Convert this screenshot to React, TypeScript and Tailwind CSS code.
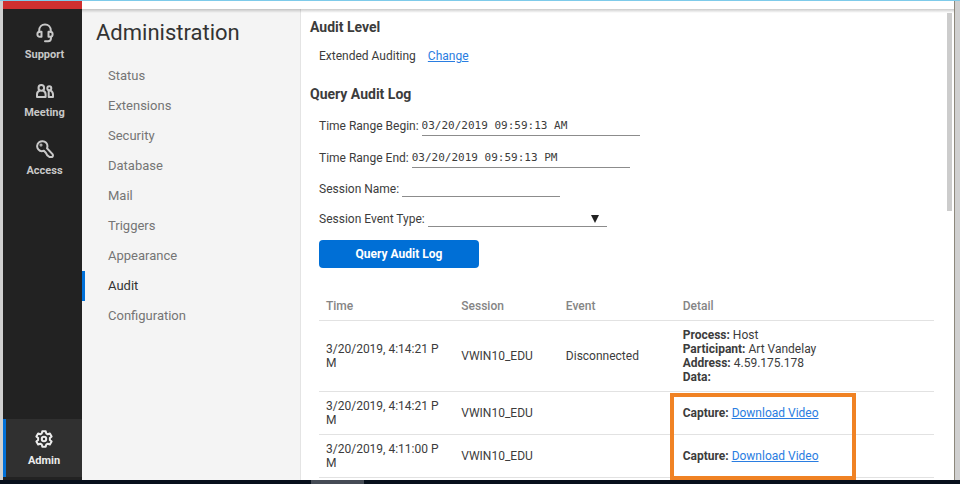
import type React from "react";

type IconProps = { className?: string };

function IconHeadset({ className }: IconProps) {
  return (
    <svg viewBox="0 0 18 20" className={className} fill="none" stroke="currentColor" strokeWidth="2" strokeLinecap="round" strokeLinejoin="round">
      <path d="M3.200 9V7.600C3.200 4 5.700 1.500 9 1.500s5.800 2.500 5.800 6.100V9" />
      <path d="M3.400 8.800H5.500v5H3.800C2.300 13.800 1.400 12.800 1.400 11.300s.8-2.500 2-2.500Z" />
      <path d="M14.600 8.800h-2.100v5h1.700c1.500 0 2.400-1 2.400-2.500s-.8-2.500-2-2.500Z" />
      <path d="M15 14v1c0 1.900-1.100 3.200-2.900 3.200H9" />
    </svg>
  );
}

function IconPeople({ className }: IconProps) {
  return (
    <svg viewBox="0 0 18 14" className={className} fill="none" stroke="currentColor" strokeWidth="2" strokeLinecap="round" strokeLinejoin="round">
      <circle cx="5.300" cy="3.900" r="2.800" />
      <path d="M3.400 6.700C1.900 7.300 1 8.700 1 10.400V13h8.600v-2.600c0-1.700-.9-3.100-2.400-3.700" />
      <circle cx="13.300" cy="4.300" r="2" />
      <path d="M12.700 6.600V13H17v-2.400c0-1.800-.9-3.300-2.400-4" />
    </svg>
  );
}

function IconKey({ className }: IconProps) {
  return (
    <svg viewBox="0 0 18 18" className={className} fill="none" stroke="currentColor" strokeWidth="2" strokeLinecap="round" strokeLinejoin="round">
      <path d="M11 8.300c.7-1.800.5-4-.9-5.600C8.300.8 5.100.6 3.100 2.300.8 4.200.5 7.300 2.300 9.300c1.400 1.700 3.700 2.200 5.600 1.400l1.900 2 1.300 2.400 2.400 1.900h2.900c.6-.8.7-2 .1-2.900L11 8.300Z" />
      <circle cx="5" cy="4.900" r="0.500" />
    </svg>
  );
}

function IconGear({ className }: IconProps) {
  return (
    <svg viewBox="0 0 18 18" className={className} fill="none" stroke="currentColor" strokeWidth="2" strokeLinejoin="round">
      <path d="M7.300 1.200h3.400l.5 2.200 1.500.9 2.200-.8 1.700 2.900-1.700 1.600v2l1.700 1.600-1.700 2.900-2.200-.8-1.500.9-.5 2.200H7.300l-.5-2.200-1.500-.9-2.200.8-1.700-2.900L3.100 10V8L1.400 6.400l1.700-2.900 2.200.8 1.500-.9Z" />
      <circle cx="9" cy="9" r="2.200" />
    </svg>
  );
}

const MAIN_NAV: { label: string; Icon: React.ComponentType<IconProps> }[] = [
  { label: "Support", Icon: IconHeadset },
  { label: "Meeting", Icon: IconPeople },
  { label: "Access", Icon: IconKey },
];

const ADMIN_PAGES = [
  "Status",
  "Extensions",
  "Security",
  "Database",
  "Mail",
  "Triggers",
  "Appearance",
  "Audit",
  "Configuration",
];

type AuditRow = {
  time: string;
  session: string;
  event?: string;
  details?: [string, string][];
};

const ROWS: AuditRow[] = [
  {
    time: "3/20/2019, 4:14:21 PM",
    session: "VWIN10_EDU",
    event: "Disconnected",
    details: [
      ["Process", "Host"],
      ["Participant", "Art Vandelay"],
      ["Address", "4.59.175.178"],
      ["Data", ""],
    ],
  },
  { time: "3/20/2019, 4:14:21 PM", session: "VWIN10_EDU" },
  { time: "3/20/2019, 4:11:00 PM", session: "VWIN10_EDU" },
];

function MainNav() {
  return (
    <nav className="flex w-[79px] shrink-0 flex-col bg-[#222222] pt-3 text-[#c8c8c8]">
      {MAIN_NAV.map(({ label, Icon }) => (
        <a key={label} href="#" className="flex h-[58px] flex-col items-center pl-1 text-[11px] font-bold leading-4">
          <span className="flex h-6 items-center">
            <Icon className="w-[18px]" />
          </span>
          <span className="mt-0.5">{label}</span>
        </a>
      ))}
      <a
        href="#"
        className="mt-auto mb-[3px] flex h-[58px] flex-col items-center border-l-[3px] border-[#0070d8] bg-[#303030] pt-2 text-[11px] font-bold leading-4 text-[#ececec]"
      >
        <span className="flex h-6 items-center">
          <IconGear className="w-[18px]" />
        </span>
        <span className="mt-0.5">Admin</span>
      </a>
    </nav>
  );
}

function AdminNav() {
  return (
    <nav className="w-[219px] shrink-0 border-r border-[#e4e4e4] bg-[#f4f4f4] pt-2">
      <h1 className="pl-[14px] text-[22px] leading-8 text-[#333333]">
        Administration
      </h1>
      <ul className="mt-3">
        {ADMIN_PAGES.map((page) => (
          <li key={page}>
            <a
              href="#"
              className={
                page === "Audit"
                  ? "block h-[30px] border-l-[3px] border-[#0070d8] pl-[23px] text-[13px] leading-[30px] text-[#333333]"
                  : "block h-[30px] pl-[26px] text-[13px] leading-[30px] text-[#757575]"
              }
            >
              {page}
            </a>
          </li>
        ))}
      </ul>
    </nav>
  );
}

function QueryForm() {
  return (
    <form className="pl-[9px]" onSubmit={(e) => e.preventDefault()}>
      <div className="mt-1.5 flex h-8 items-center gap-[3px]">
        <label htmlFor="begin">Time Range Begin:</label>
        <input
          id="begin"
          defaultValue="03/20/2019 09:59:13 AM"
          className="h-5 w-[218px] border-b border-[#8c8c8c] font-['DejaVu_Sans_Mono',monospace] text-[11px] outline-none"
        />
      </div>
      <div className="flex h-8 items-center gap-[3px]">
        <label htmlFor="end">Time Range End:</label>
        <input
          id="end"
          defaultValue="03/20/2019 09:59:13 PM"
          className="h-5 w-[218px] border-b border-[#8c8c8c] font-['DejaVu_Sans_Mono',monospace] text-[11px] outline-none"
        />
      </div>
      <div className="flex h-[30px] items-center gap-[3px]">
        <label htmlFor="session">Session Name:</label>
        <input id="session" className="h-4 w-[158px] border-b border-[#8c8c8c] outline-none" />
      </div>
      <div className="flex h-[30px] items-center gap-[3px]">
        <label htmlFor="event-type">Session Event Type:</label>
        <div className="relative">
          <select
            id="event-type"
            className="block h-4 w-[179px] appearance-none border-b border-[#8c8c8c] bg-transparent outline-none"
          />
          <svg viewBox="0 0 8 8" className="pointer-events-none absolute top-1 right-2 h-2 w-2" fill="#222222">
            <path d="M0 0h8L4 8Z" />
          </svg>
        </div>
      </div>
      <button
        type="submit"
        className="mt-1.5 block h-7 w-40 rounded-sm bg-[#006fd6] text-[12px] font-bold text-white"
      >
        Query Audit Log
      </button>
    </form>
  );
}

function AuditTable() {
  return (
    <div className="relative mt-6 mr-[13px] ml-[9px]">
      <table className="w-full table-fixed border-collapse text-left leading-[14px]">
        <colgroup>
          <col className="w-[22%]" />
          <col className="w-[17%]" />
          <col className="w-[19%]" />
          <col />
        </colgroup>
        <thead>
          <tr className="h-7 border-b border-[#e2e2e2] text-[#858585]">
            {["Time", "Session", "Event", "Detail"].map((title) => (
              <th key={title} className="px-[7px] font-medium">
                {title}
              </th>
            ))}
          </tr>
        </thead>
        <tbody>
          {ROWS.map((row, i) => (
            <tr key={i} className="border-b border-[#e2e2e2]">
              <td className="break-all py-[7px] pr-3 pl-[7px]">{row.time}</td>
              <td className="px-[7px]">{row.session}</td>
              <td className="px-[7px]">{row.event}</td>
              <td className="p-[7px]">
                {row.details ? (
                  row.details.map(([name, value]) => (
                    <div key={name}>
                      <b>{name}:</b> {value}
                    </div>
                  ))
                ) : (
                  <>
                    <b>Capture:</b>{" "}
                    <a href="#" className="text-[#2a7de1] underline">
                      Download Video
                    </a>
                  </>
                )}
              </td>
            </tr>
          ))}
        </tbody>
      </table>
      <div className="pointer-events-none absolute -bottom-0.5 left-[57%] h-[87px] w-[186px] border-4 border-[#f08224]" />
    </div>
  );
}

export default function App() {
  return (
    <div className="flex h-screen flex-col overflow-hidden border-t border-[#7ecbea] bg-[#d0d0d0] font-[Roboto,sans-serif] text-[12px] text-[#3c3c3c]">
      <div className="mr-[5px] ml-[3px] flex min-h-0 flex-1 flex-col border-r border-[#8d887c] bg-white">
        <header className="h-2 shrink-0 bg-white">
          <div className="h-full w-[79px] bg-[#cf3030]" />
        </header>
        <div className="flex min-h-0 flex-1">
          <MainNav />
          <div className="relative flex min-w-0 flex-1">
            <AdminNav />
            <main className="min-w-0 flex-1 overflow-hidden pt-2 pl-[9px]">
              <div className="flex">
                <div className="min-w-0 flex-1">
                  <h2 className="text-[14px] font-bold leading-5">Audit Level</h2>
                  <p className="mt-[9px] flex gap-3 pl-[9px] leading-5">
                    Extended Auditing
                    <a href="#" className="text-[#2a7de1] underline">
                      Change
                    </a>
                  </p>
                  <h2 className="mt-[18px] text-[14px] font-bold leading-5">
                    Query Audit Log
                  </h2>
                  <QueryForm />
                  <AuditTable />
                </div>
                <div className="-mt-1 mr-[2px] h-[198px] w-[5px] shrink-0 bg-[#cccccc]" />
              </div>
            </main>
            <div className="pointer-events-none absolute inset-x-0 top-0 h-1 bg-linear-to-b from-black/20 to-transparent" />
          </div>
        </div>
      </div>
      <footer className="flex h-1 shrink-0 bg-[#07101c]">
        <div className="ml-[311px] w-[53px] bg-[#454b55]" />
      </footer>
    </div>
  );
}
